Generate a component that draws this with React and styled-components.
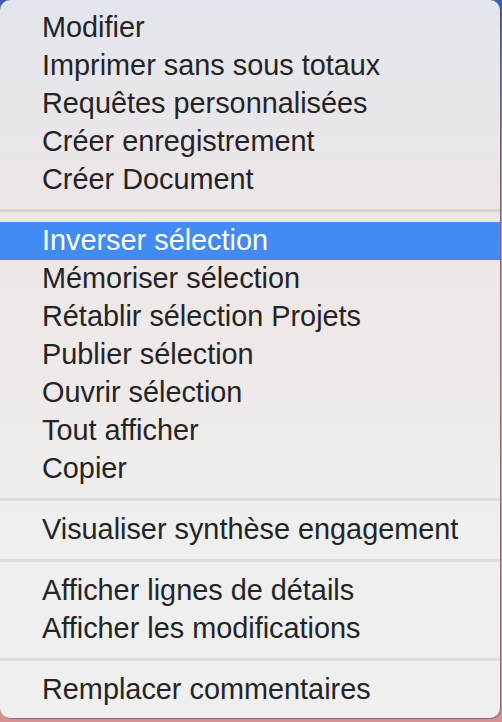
import React from 'react';
import styled, { createGlobalStyle } from 'styled-components';

const GlobalStyle = createGlobalStyle`
    html, body {
        margin: 0;
        padding: 0;
        height: 100%;
    }

    body {
        background: linear-gradient(180deg, #3a5fad 0px, #6678b6 40px, #b996a6 220px, #d29a9c 500px, #d59092 100%);
        font-family: 'Liberation Sans', Arial, sans-serif;
        overflow: hidden;
    }
`;

const Menu = styled.ul`
    list-style: none;
    margin: 0;
    width: 500px;
    height: 718px;
    box-sizing: border-box;
    padding: 9px 0;
    border-radius: 10px;
    overflow: hidden;
    background: linear-gradient(180deg, #e3e6ed 0px, #e8e6eb 90px, #ece6e8 180px, #eee7e7 280px, #efeaea 400px, #efefef 520px, #efefef 100%);
    box-shadow: 1px 1px 0 rgba(70, 50, 55, 0.45);
`;

const Item = styled.li`
    height: 38px;
    line-height: 36px;
    padding-left: 42px;
    font-size: 28.85px;
    color: ${props => props.active ? '#ffffff' : '#242424'};
    background: ${props => props.active ? '#428bf3' : 'transparent'};
    white-space: nowrap;
    cursor: default;
`;

const Separator = styled.li`
    height: 3px;
    margin: 10px 0;
    background: rgba(0, 0, 0, 0.075);
`;

const groups = [
    [
        'Modifier',
        'Imprimer sans sous totaux',
        'Requêtes personnalisées',
        'Créer enregistrement',
        'Créer Document',
    ],
    [
        'Inverser sélection',
        'Mémoriser sélection',
        'Rétablir sélection Projets',
        'Publier sélection',
        'Ouvrir sélection',
        'Tout afficher',
        'Copier',
    ],
    ['Visualiser synthèse engagement'],
    ['Afficher lignes de détails', 'Afficher les modifications'],
    ['Remplacer commentaires'],
];

const App = () => {
    const active = 'Inverser sélection';

    return (
        <>
            <GlobalStyle />
            <Menu>
                {groups.map((group, i) => (
                    <React.Fragment key={i}>
                        {i > 0 && <Separator />}
                        {group.map(label => (
                            <Item key={label} active={label === active}>{label}</Item>
                        ))}
                    </React.Fragment>
                ))}
            </Menu>
        </>
    );
};

export default App;
